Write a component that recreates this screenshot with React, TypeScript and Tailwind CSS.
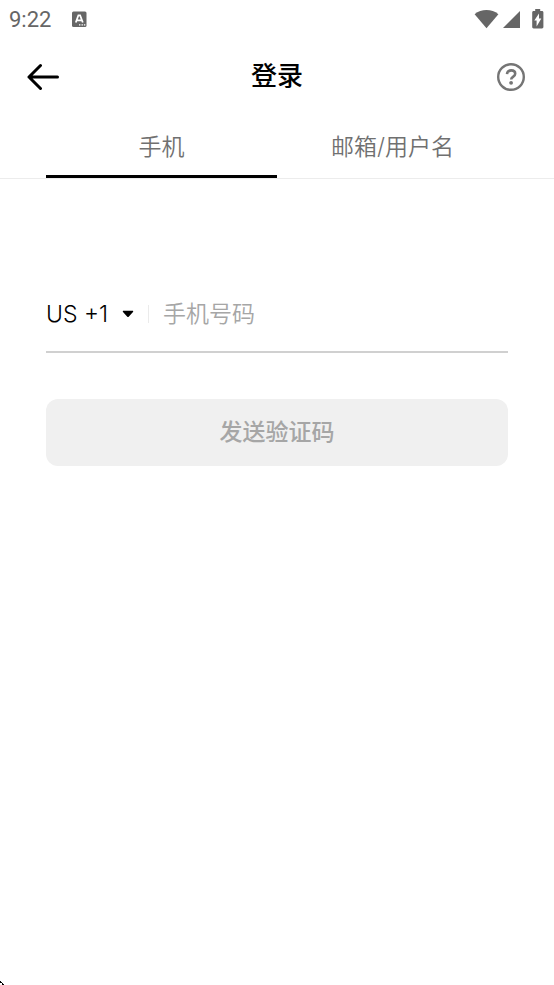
import { useState } from "react";

type LoginMethod = "phone" | "account";

const TABS: { id: LoginMethod; label: string }[] = [
  { id: "phone", label: "手机" },
  { id: "account", label: "邮箱/用户名" },
];

const COUNTRIES = ["US +1", "CA +1", "GB +44", "CN +86"];

function StatusBar() {
  return (
    <div className="flex h-10 items-center justify-between pr-[9px] pl-[9px] text-[#666666]">
      <div className="flex items-center gap-5">
        <span className="font-[Roboto,sans-serif] text-[22px] leading-6">9:22</span>
        <svg width="16" height="18" viewBox="0 0 16 18" aria-hidden="true">
          <rect x="1" y="0.5" width="14.5" height="15.5" rx="1.5" fill="currentColor" />
          <path
            d="M4.8 11.500 7.400 4.300h1.700l2.700 7.200M5.800 9.300h5"
            fill="none"
            stroke="#fff"
            strokeWidth="1.8"
          />
          <path d="M8 13.200h1.400v1.400H8zM10.500 13.200h1.400v1.400h-1.400zM12.900 13.200h1.400v1.400h-1.400z" fill="#fff" />
        </svg>
      </div>

      <div className="flex items-center">
        <svg width="26" height="20" viewBox="0 0 26 20" fill="currentColor" aria-hidden="true">
          <path d="M1.600 4.200C5 1.300 9.200 0 13.500 0s8.500 1.300 11.900 4.200L13.500 18.300z" />
        </svg>
        <svg
          className="ml-1"
          width="18"
          height="20"
          viewBox="0 0 18 20"
          fill="currentColor"
          aria-hidden="true"
        >
          <path d="M17 1V18H0z" />
        </svg>
        <svg
          className="ml-[10px]"
          width="14"
          height="22"
          viewBox="0 0 14 22"
          fill="currentColor"
          aria-hidden="true"
        >
          <path d="M4.200 0h5v2h1.800c.8 0 1.400.6 1.400 1.400v14.700c0 .8-.6 1.400-1.400 1.400H2.600c-.8 0-1.400-.6-1.400-1.400V3.400C1.200 2.600 1.800 2 2.600 2h1.600z" />
          <path d="M8 4.500v5h2.300L5.600 17.500v-6H3.300z" fill="#fff" />
        </svg>
      </div>
    </div>
  );
}

function Header() {
  return (
    <header className="flex h-[74px] items-center justify-between px-[27px]">
      <button type="button" aria-label="返回" className="flex w-9 cursor-pointer">
        <svg width="34" height="28" viewBox="0 0 34 28" aria-hidden="true">
          <path
            d="M30.500 14H2M13.500 2.500 2 14l11.500 11.500"
            fill="none"
            stroke="#000"
            strokeWidth="3"
            strokeLinecap="round"
            strokeLinejoin="round"
          />
        </svg>
      </button>
      <h1 className="pb-[2px] text-[26px] leading-8 font-medium">登录</h1>
      <button type="button" aria-label="帮助" className="flex w-9 cursor-pointer justify-end">
        <svg width="32" height="30" viewBox="0 0 32 30" fill="none" aria-hidden="true">
          <circle cx="16" cy="15" r="12.800" stroke="#757575" strokeWidth="2.400" />
          <path
            d="M12 12.100c.2-2.500 1.800-3.700 4.100-3.700s4.100 1.200 4.100 3.300c0 1.600-.9 2.300-2.200 3.200-1.200.8-1.800 1.300-1.800 2.700"
            stroke="#757575"
            strokeWidth="2.600"
          />
          <circle cx="16.100" cy="20.800" r="1.900" fill="#757575" />
        </svg>
      </button>
    </header>
  );
}

export default function App() {
  const [method, setMethod] = useState<LoginMethod>("phone");
  const [country, setCountry] = useState(COUNTRIES[0]);
  const [phone, setPhone] = useState("");

  return (
    <div className="relative min-h-screen bg-white font-[Inter,'Noto_Sans_CJK_SC',sans-serif] text-black">
      <StatusBar />
      <Header />

      <div role="tablist" className="flex border-b border-[#ececec] px-[46px]">
        {TABS.map((tab) => (
          <button
            key={tab.id}
            type="button"
            role="tab"
            aria-selected={method === tab.id}
            onClick={() => setMethod(tab.id)}
            className={`flex-1 cursor-pointer border-b-3 pt-[17px] pb-3 text-[23px] leading-8 font-[350] text-[#707070] ${
              method === tab.id ? "border-black" : "border-transparent"
            }`}
          >
            {tab.label}
          </button>
        ))}
      </div>

      <form className="px-[46px] pt-[111px]" onSubmit={(e) => e.preventDefault()}>
        <div className="flex items-center border-b-2 border-[#d0d0d0] pt-2 pb-[21px] text-[23px] leading-8 font-[350]">
          <div className="relative flex items-center">
            <select
              aria-label="国家/地区"
              value={country}
              onChange={(e) => setCountry(e.target.value)}
              className="field-sizing-content cursor-pointer appearance-none bg-transparent pr-[26px] outline-none"
            >
              {COUNTRIES.map((c) => (
                <option key={c}>{c}</option>
              ))}
            </select>
            <svg
              className="pointer-events-none absolute right-0"
              width="12"
              height="8"
              viewBox="0 0 12 8"
              aria-hidden="true"
            >
              <path d="M1.500.8h9c.7 0 1 .7.500 1.200L6.700 6.800c-.4.400-1 .4-1.400 0L1 2C.5 1.500.8.8 1.500.8z" />
            </svg>
          </div>
          <span className="mx-[14px] h-[18px] w-px bg-[#ebebeb]" />
          <input
            type="tel"
            aria-label="手机号码"
            placeholder="手机号码"
            value={phone}
            onChange={(e) => setPhone(e.target.value)}
            className="min-w-0 flex-1 outline-none placeholder:text-[#a6a6a6]"
          />
        </div>

        <button
          type="submit"
          disabled={phone === ""}
          className="mt-[46px] w-full rounded-xl bg-[#f0f0f0] pt-[17px] pb-[18px] text-[23px] leading-8 font-medium text-[#a6a6a6]"
        >
          发送验证码
        </button>
      </form>

      <svg
        className="absolute bottom-0 left-0"
        width="4"
        height="4"
        viewBox="0 0 4 4"
        shapeRendering="crispEdges"
        aria-hidden="true"
      >
        <path d="M0 0h1v1h1v1H0zM2 2h1v1h1v1H2z" />
      </svg>
    </div>
  );
}
